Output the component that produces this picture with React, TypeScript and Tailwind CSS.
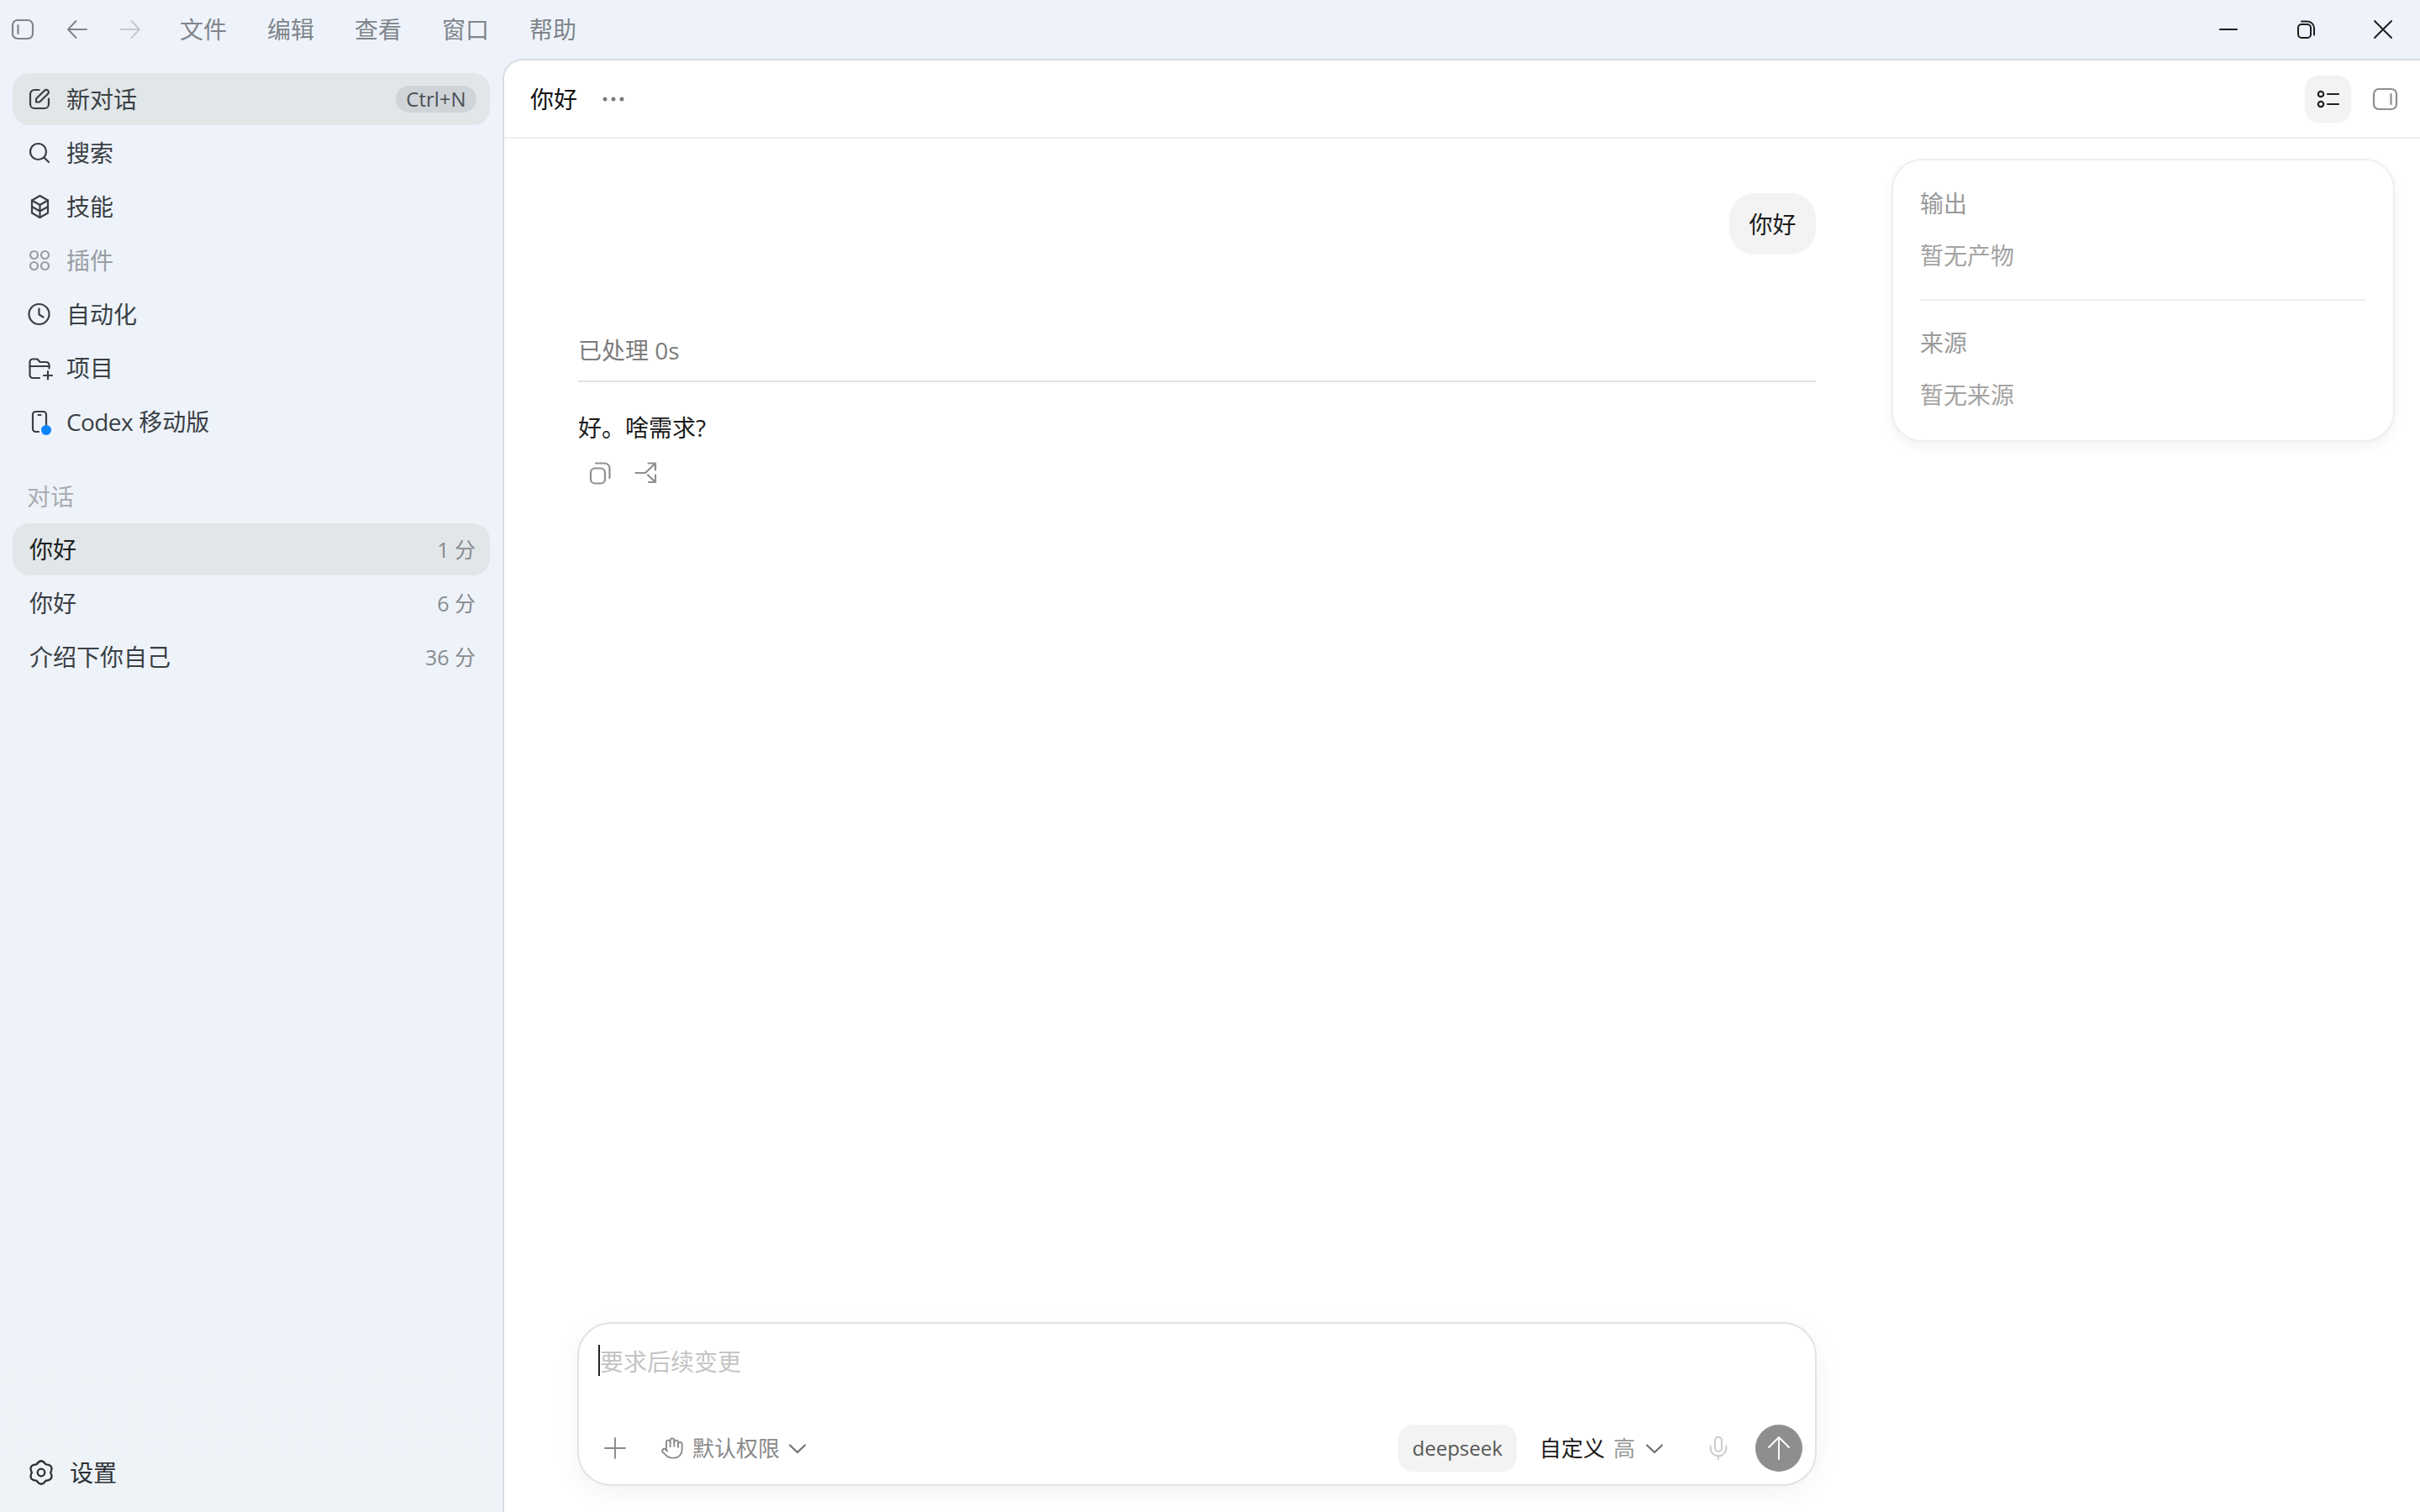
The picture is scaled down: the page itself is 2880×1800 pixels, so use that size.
import type { ReactNode } from "react";
import { Hand, Mic } from "lucide-react";

function Ico({
  children,
  className,
  box = "0 0 26 26",
  sw = 2.2,
}: {
  children: ReactNode;
  className: string;
  box?: string;
  sw?: number;
}) {
  return (
    <svg viewBox={box} fill="none" stroke="currentColor" strokeWidth={sw} strokeLinecap="round" strokeLinejoin="round" className={`overflow-visible ${className}`}>
      {children}
    </svg>
  );
}

const chevron = <path d="M5 10.500 14 19 23 10.500" />;

const navItems = [
  {
    label: "搜索",
    icon: (
      <>
        <circle cx="11.500" cy="11.500" r="9.500" />
        <path d="m18.500 18.500 5.500 5.500" />
      </>
    ),
  },
  {
    label: "技能",
    icon: (
      <>
        <path d="M13.500 0 23 5.500v15L13.500 26 4 20.500v-15z" />
        <path d="m4 5.500 9.500 5.500L23 5.500M13.500 11v15M4 13l9.500 5.500L23 13" />
      </>
    ),
  },
  {
    label: "插件",
    dim: true,
    icon: (
      <>
        <circle cx="6.500" cy="6.500" r="4.500" />
        <circle cx="19.500" cy="6.500" r="4.500" />
        <circle cx="6.500" cy="19.500" r="4.500" />
        <circle cx="19.500" cy="19.500" r="4.500" />
      </>
    ),
  },
  {
    label: "自动化",
    icon: (
      <>
        <circle cx="12.500" cy="13" r="12" />
        <path d="M12.500 6.500v7l5 3" />
      </>
    ),
  },
  {
    label: "项目",
    icon: (
      <>
        <path d="M13 25H5a3.500 3.500 0 0 1-3.500-3.500V6A3.500 3.500 0 0 1 5 2.500h5.500l3 3.500H21a3.500 3.500 0 0 1 3.500 3.500v4" />
        <path d="M1.500 11h23M23 17v9.500M18 22h10" />
      </>
    ),
  },
];

const chats = [
  { title: "你好", time: "1 分", active: true },
  { title: "你好", time: "6 分" },
  { title: "介绍下你自己", time: "36 分" },
];

function TitleBar() {
  return (
    <div className="flex h-[70px] shrink-0 items-center text-[#80858b]">
      <Ico box="0 0 28 28" className="ml-[13px] size-[28px] shrink-0">
        <rect x="2" y="3" width="24" height="22" rx="6" />
        <path d="M8.500 9v10" />
      </Ico>
      <Ico box="0 0 28 28" sw={2} className="ml-[37px] size-[28px] shrink-0">
        <path d="M3 14h22M12.500 4 3 14l9.500 10" />
      </Ico>
      <Ico box="0 0 28 28" sw={2} className="ml-[35px] size-[28px] shrink-0 text-[#c6cace]">
        <path d="M3 14h22M15.500 4 25 14l-9.500 10" />
      </Ico>
      <div className="ml-[45px] flex gap-[48px] text-[28px] leading-[40px]">
        <span>文件</span>
        <span>编辑</span>
        <span>查看</span>
        <span>窗口</span>
        <span>帮助</span>
      </div>
      <div className="ml-auto mr-[30px] flex items-center gap-[64px] text-[#1c1c1c]">
        <Ico box="0 0 28 28" className="size-[28px]">
          <path d="M4 14h20" />
        </Ico>
        <Ico box="0 0 28 28" sw={2} className="size-[28px]">
          <rect x="5" y="8" width="15" height="16" rx="4" />
          <path d="M9 4.500h7a8 8 0 0 1 8 8v8" />
        </Ico>
        <Ico box="0 0 28 28" sw={1.9} className="size-[28px]">
          <path d="m4 4 20 20M24 4 4 24" />
        </Ico>
      </div>
    </div>
  );
}

function Sidebar() {
  return (
    <aside className="flex w-[598px] shrink-0 flex-col px-[15px] pb-[16px] pt-[17px] text-[28px] leading-[40px] text-[#3a3f44]">
      <div className="flex flex-col gap-[2px]">
        <div className="flex h-[62px] items-center gap-[19px] rounded-[20px] bg-[#e1e6e9] pl-[19px] pr-[16px]">
          <Ico className="size-[26px] shrink-0">
            <path d="M12.500 2H7a5 5 0 0 0-5 5v12a5 5 0 0 0 5 5h12a5 5 0 0 0 5-5v-6.500" />
            <path d="M9 16.500v-4L19 2.800a2.800 2.800 0 0 1 4 4L13 16.500z" />
          </Ico>
          <span>新对话</span>
          <span className="ml-auto flex h-[32px] w-[96px] items-center justify-center rounded-full bg-[#cfd4d8] text-[24px] text-[#4b5056]">
            Ctrl+N
          </span>
        </div>
        {navItems.map((item) => (
          <div
            key={item.label}
            className={`flex h-[62px] items-center gap-[19px] pl-[19px] ${item.dim ? "text-[#9a9ea3]" : ""}`}
          >
            <Ico className="size-[26px] shrink-0">{item.icon}</Ico>
            <span>{item.label}</span>
          </div>
        ))}
        <div className="flex h-[62px] items-center gap-[19px] pl-[19px]">
          <div className="relative size-[26px] shrink-0">
            <Ico className="size-[26px]">
              <path d="M12 25H8.500a3.500 3.500 0 0 1-3.500-3.500v-17A3.500 3.500 0 0 1 8.500 1h9A3.500 3.500 0 0 1 21 4.500v15" />
              <path d="M11.500 5h3" />
            </Ico>
            <span className="absolute bottom-[-3px] right-[-1px] size-[12px] rounded-full bg-[#0a84ff]" />
          </div>
          <span>
            <span className="tracking-[-0.6px]">Codex</span> 移动版
          </span>
        </div>
      </div>

      <div className="mb-[12px] ml-[17px] mt-[38px] text-[#a9adb2]">对话</div>
      <div className="flex flex-col gap-[2px]">
        {chats.map((chat, i) => (
          <div
            key={i}
            className={`flex h-[62px] items-center justify-between rounded-[20px] pl-[20px] pr-[17px] ${
              chat.active ? "bg-[#e1e6e9] text-[#1c1f22]" : ""
            }`}
          >
            <span>{chat.title}</span>
            <span className="text-[25px] text-[#888c90]">{chat.time}</span>
          </div>
        ))}
      </div>

      <div className="mt-auto flex h-[62px] items-center gap-[19px] pl-[19px] text-[#2c3034]">
        <Ico box="1.500 1.500 21 21" sw={1.6} className="size-[30px] shrink-0">
          <path d="M8.100 5.250Q12-.5 15.900 5.250 22.830 5.750 19.800 12 22.830 18.250 15.900 18.750 12 24.500 8.100 18.750 1.170 18.250 4.200 12 1.170 5.750 8.100 5.250Z" />
          <circle cx="12" cy="12" r="3" />
        </Ico>
        <span>设置</span>
      </div>
    </aside>
  );
}

function Composer() {
  return (
    <div className="-mx-[1px] mb-[31px] mt-auto flex h-[195px] shrink-0 flex-col justify-between rounded-[40px] border-2 border-[#e3e3e3] bg-white pb-[15px] pr-[15px] pt-[25px] shadow-[0_8px_32px_rgba(0,0,0,0.05)]">
      <div className="flex items-start pl-[23px] text-[28px] leading-[40px] text-[#c4c4c4]">
        <span className="h-[37px] w-[2px] bg-[#222222]" />
        <span>要求后续变更</span>
      </div>
      <div className="flex h-[56px] items-center text-[26px] leading-[36px]">
        <Ico sw={1.9} className="ml-[30px] size-[26px] shrink-0 text-[#8a8a8a]">
          <path d="M13 1v24M1 13h24" />
        </Ico>
        <Hand className="ml-[41px] size-[28px] shrink-0 text-[#8a8a8a]" strokeWidth={1.6} />
        <span className="ml-[10px] text-[#8a8a8a]">默认权限</span>
        <Ico box="0 0 28 28" className="ml-[7px] size-[28px] shrink-0 text-[#6f6f6f]">
          {chevron}
        </Ico>
        <span className="ml-auto flex h-[56px] w-[141px] items-center justify-center rounded-[18px] bg-[#f3f3f3] text-[24px] text-[#555555]">
          deepseek
        </span>
        <span className="ml-[27px] text-[#1a1a1a]">自定义</span>
        <span className="ml-[10px] text-[#999999]">高</span>
        <Ico box="0 0 28 28" className="ml-[9px] size-[28px] shrink-0 text-[#6f6f6f]">
          {chevron}
        </Ico>
        <Mic className="ml-[46px] size-[32px] shrink-0 text-[#cccccc]" strokeWidth={1.5} />
        <span className="ml-[28px] flex size-[56px] items-center justify-center rounded-full bg-[#8e8e8e] text-white">
          <Ico box="0 0 28 28" sw={1.9} className="size-[28px]">
            <path d="M14 1v26M2 13 14 1l12 12" />
          </Ico>
        </span>
      </div>
    </div>
  );
}

function OutputPanel() {
  return (
    <aside className="mt-[24px] h-[337px] w-[599px] shrink-0 rounded-[36px] border-2 border-[#eeeeee] bg-white px-[32px] pt-[31px] text-[28px] leading-[40px] text-[#9a9a9a] shadow-[0_6px_14px_rgba(0,0,0,0.05)]">
      <div>输出</div>
      <div className="mt-[22px] text-[#a3a3a3]">暂无产物</div>
      <div className="mr-[1px] mt-[32px] h-[2px] bg-[#eeeeee]" />
      <div className="mt-[30px]">来源</div>
      <div className="mt-[22px] text-[#a3a3a3]">暂无来源</div>
    </aside>
  );
}

function Conversation() {
  return (
    <div className="ml-[88px] flex w-[1473px] shrink-0 flex-col pt-[65px]">
      <div className="flex h-[73px] w-[103px] items-center justify-center self-end rounded-[30px] bg-[#f3f3f3] text-[28px] text-[#1a1a1a]">
        你好
      </div>
      <div className="mt-[94px] border-b-2 border-[#e3e3e3] pb-[16px] text-[28px] leading-[40px] text-[#7c7c7c]">
        已处理 0s
      </div>
      <div className="mt-[34px] text-[28px] leading-[40px] text-[#1a1a1a]">好。啥需求?</div>
      <div className="mt-[21px] flex gap-[27px] pl-[12px] text-[#8f8f8f]">
        <Ico box="0 0 27 27" className="size-[27px]">
          <rect x="3" y="7.500" width="17" height="18" rx="5" />
          <path d="M9 1.500h10.500a6 6 0 0 1 6 6V19" />
        </Ico>
        <Ico box="0 0 27 27" className="size-[27px]">
          <path d="M2.500 13H14L25.500 2M17.500 1.500H26v8M17 15.500l9 8.500M26 15.500V24h-8" />
        </Ico>
      </div>
      <Composer />
    </div>
  );
}

export default function App() {
  return (
    <div className="flex h-screen w-full flex-col overflow-hidden bg-linear-to-b from-[#eef3fb] to-[#eef3f8] font-['Open_Sans','Noto_Sans_CJK_SC',sans-serif]">
      <TitleBar />
      <div className="flex min-h-0 flex-1">
        <Sidebar />
        <main className="flex min-w-0 flex-1 flex-col rounded-tl-[24px] border-l-2 border-t-2 border-[#d8dce3] bg-white">
          <header className="flex h-[93px] shrink-0 items-center border-b-2 border-[#eeeeee] pl-[31px] pr-[26px]">
            <span className="text-[28px] leading-[40px] text-[#111111]">你好</span>
            <svg viewBox="0 0 28 8" className="ml-[29px] h-[8px] w-[28px] fill-[#7b7b7b]">
              <circle cx="4" cy="4" r="2.500" />
              <circle cx="14" cy="4" r="2.500" />
              <circle cx="24" cy="4" r="2.500" />
            </svg>
            <span className="ml-auto flex h-[56px] w-[55px] items-center justify-center rounded-[16px] bg-[#f3f3f3] text-[#222222]">
              <Ico box="0 0 30 30" className="size-[30px]">
                <circle cx="6" cy="9" r="3.200" />
                <circle cx="6" cy="21" r="3.200" />
                <path d="M14 9h13M14 21h13" />
              </Ico>
            </span>
            <Ico box="0 0 32 32" className="ml-[24px] size-[32px] text-[#8f8f8f]">
              <rect x="3" y="4" width="27" height="24" rx="6" />
              <path d="M23.500 10v12" />
            </Ico>
          </header>
          <div className="flex min-h-0 flex-1">
            <Conversation />
            <div className="ml-[90px]">
              <OutputPanel />
            </div>
          </div>
        </main>
      </div>
    </div>
  );
}
